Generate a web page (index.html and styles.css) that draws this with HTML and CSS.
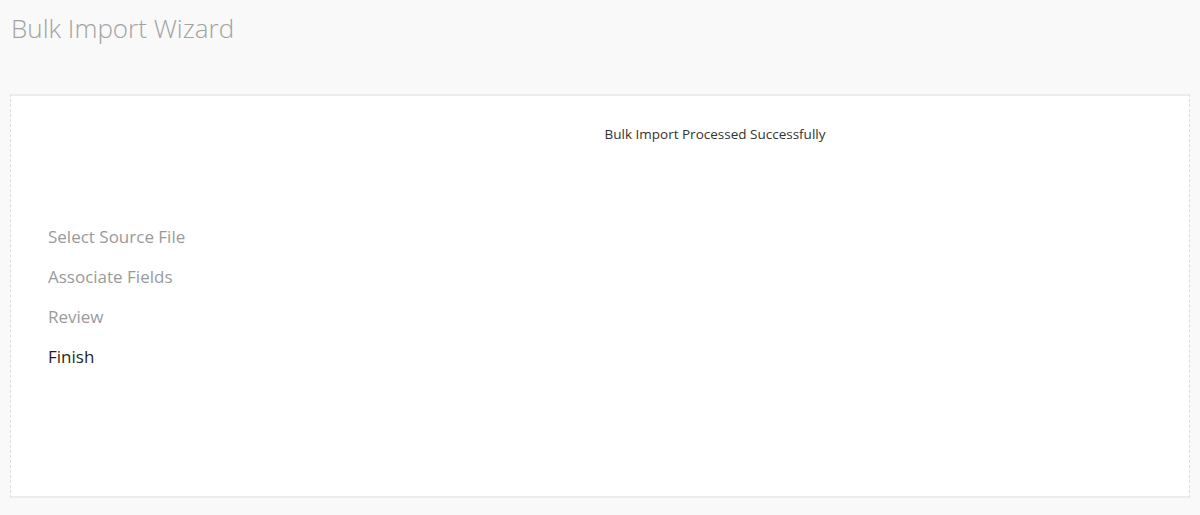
FILE: index.html
```html
<!DOCTYPE html>
<html>
<head>
<meta charset="utf-8">
<link rel="stylesheet" href="styles.css">
</head>
<body>
<header class="page-header">
  <h1 class="page-title">Bulk Import Wizard</h1>
</header>
<section class="wizard">
  <nav class="steps">
    <div class="step">Select Source File</div>
    <div class="step">Associate Fields</div>
    <div class="step">Review</div>
    <div class="step step-active">Finish</div>
  </nav>
  <main class="content">
    <p class="message">Bulk Import Processed Successfully</p>
  </main>
</section>
</body>
</html>
```
FILE: styles.css
```css
html, body {
  margin: 0;
  padding: 0;
  background: #f9f9f9;
  font-family: "Open Sans", "Liberation Sans", sans-serif;
}
.page-header {
  padding: 10px 11px 0;
  height: 94px;
  box-sizing: border-box;
}
.page-title {
  margin: 0;
  font-size: 26px;
  font-weight: 300;
  color: #a3a3a3;
  line-height: 36px;
}
.wizard {
  margin: 0 10px;
  height: 404px;
  box-sizing: border-box;
  background: #fff;
  border-top: 2px solid #ececec;
  border-bottom: 2px solid #ececec;
  border-left: 1px dashed #dcdcdc;
  border-right: 1px dashed #dcdcdc;
  display: grid;
  grid-template-columns: 240px 1fr;
}
.steps {
  padding: 121px 0 0 37px;
  display: flex;
  flex-direction: column;
}
.step {
  font-size: 17px;
  line-height: 40px;
  color: #9a9a9a;
}
.step-active {
  color: #1f1f1f;
}
.content {
  text-align: center;
  padding-top: 28px;
}
.message {
  margin: 0;
  font-size: 13.5px;
  line-height: 20px;
  color: #333;
  padding-right: 10px;
}
```
